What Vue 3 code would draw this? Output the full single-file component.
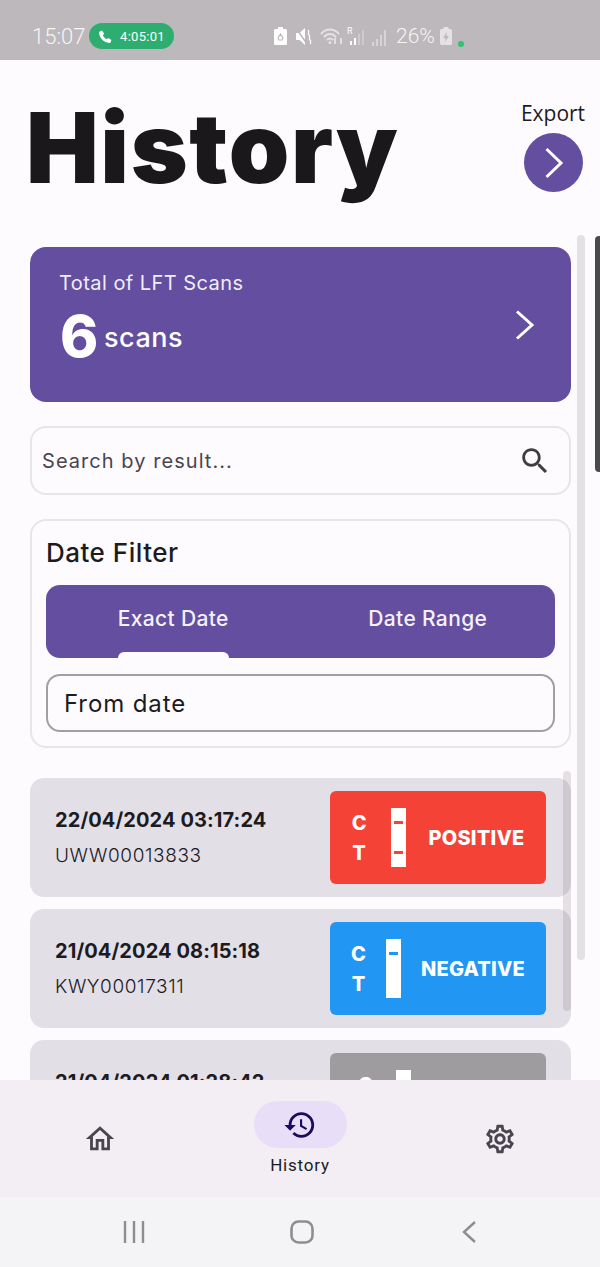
<script setup>
const scans = [
  { date: '22/04/2024 03:17:24', code: 'UWW00013833', label: 'POSITIVE', kind: 'positive', marks: 2 },
  { date: '21/04/2024 08:15:18', code: 'KWY00017311', label: 'NEGATIVE', kind: 'negative', marks: 1 },
  { date: '21/04/2024 01:28:42', code: '', label: '', kind: 'invalid', marks: 0 }
]
</script>

<template>
  <div class="phone">
    <header class="status">
      <span class="clock">15:07</span>
      <span class="call">
        <svg width="15" height="15" viewBox="0 0 24 24"><path fill="#fff" d="M6.6 2.5l3.2 5.2-2 2.4c1.200 2.800 3.300 4.900 6.100 6.100l2.400-2 5.200 3.200-1.300 3.800c-.3.8-1 1.300-1.900 1.200C9.300 21.800 2.200 14.700 1.600 5.700c-.1-.9.400-1.600 1.200-1.900z"/></svg>
        <span>4:05:01</span>
      </span>
      <div class="status-icons">
        <svg class="si-saver" width="13" height="18" viewBox="0 0 13 18"><path fill="#fff" d="M4 0h5v2h2.500A1.500 1.500 0 0 1 13 3.500V16.500A1.500 1.500 0 0 1 11.500 18H1.500A1.500 1.500 0 0 1 0 16.500V3.500A1.500 1.500 0 0 1 1.500 2H4z"/><path fill="none" stroke="#bcb8bb" stroke-width="1.200" d="M6.500 7l2.500 4-1 2H5l-1-2z"/></svg>
        <svg class="si-mute" width="17" height="19" viewBox="0 0 17 19"><path fill="#fff" d="M0 6h3.500L9 1v17l-5.500-5H0z"/><path stroke="#bcb8bb" stroke-width="1.500" d="M0 1l11 16"/><path fill="none" stroke="#fff" stroke-width="1.300" d="M12 3c2 2-1 3 1 5s-1 3 1 5-1 2 1 4"/></svg>
        <svg class="si-wifi" width="24" height="18" viewBox="0 0 24 18"><path fill="none" stroke="#e4e2e4" stroke-width="2" d="M1 7c5-6 13-6 18 0M4 10c3.500-4 8.500-4 12 0M7 13c2-2 4-2 6 0"/><circle cx="10" cy="15.500" r="1.500" fill="#e4e2e4"/><path stroke="#f4f4f4" stroke-width="1.300" d="M15 11v6M21 11v6"/></svg>
        <svg class="si-signal" width="18" height="20" viewBox="0 0 18 20"><text x="0" y="8" class="roam">R</text><path fill="#fff" d="M3 15h2v4H3zM7 12h2v7H7z"/><path fill="#cdcbcd" d="M11 8h2v11h-2zM15 4h2v15h-2z"/></svg>
        <svg class="si-signal2" width="16" height="17" viewBox="0 0 16 17"><path fill="#d6d4d6" d="M0 13h2v4H0zM4 10h2v7H4zM8 6h2v11H8zM12 1h2v16h-2z"/></svg>
        <span class="pct">26%</span>
        <svg class="si-batt" width="12" height="18" viewBox="0 0 12 18"><path fill="#e4e2e4" d="M3.500 0h5v2h2A1.500 1.500 0 0 1 12 3.500V16.500A1.500 1.500 0 0 1 10.500 18H1.500A1.500 1.500 0 0 1 0 16.500V3.500A1.500 1.500 0 0 1 1.500 2h2z"/><path fill="#bcb8bb" d="M7 5L3 11h2.500L5 15l4-6H6.500z"/></svg>
        <span class="dot"></span>
      </div>
    </header>

    <main class="content">
      <div class="top">
        <h1 class="title">History</h1>
        <div class="export">
          <span class="export-label">Export</span>
          <button class="export-btn">
            <svg width="20" height="32" viewBox="0 0 20 32"><path fill="none" stroke="#fff" stroke-width="3" d="M2.500 2L17 16 2.500 30"/></svg>
          </button>
        </div>
      </div>

      <section class="total">
        <div>
          <div class="total-label">Total of LFT Scans</div>
          <div class="total-value"><b>6</b><span>scans</span></div>
        </div>
        <svg width="20" height="30" viewBox="0 0 20 30"><path fill="none" stroke="#fff" stroke-width="3" d="M2 1.500L17 15 2 28.500"/></svg>
      </section>

      <div class="search">
        <span>Search by result...</span>
        <svg width="34" height="34" viewBox="0 0 24 24"><path fill="#3f3d42" d="M15.500 14h-.79l-.28-.27C15.410 12.590 16 11.110 16 9.500 16 5.910 13.090 3 9.500 3S3 5.910 3 9.500 5.910 16 9.500 16c1.610 0 3.090-.59 4.230-1.570l.27.28v.79l5 4.990L20.490 19l-4.990-5zm-6 0C7.010 14 5 11.990 5 9.500S7.010 5 9.500 5 14 7.010 14 9.500 11.990 14 9.500 14z"/></svg>
      </div>

      <section class="filter">
        <h2>Date Filter</h2>
        <div class="tabs">
          <div class="tab active"><span>Exact Date<i class="indicator"></i></span></div>
          <div class="tab"><span>Date Range</span></div>
        </div>
        <div class="from">From date</div>
      </section>

      <ul class="list">
        <li v-for="s in scans" :key="s.date" class="row">
          <div class="meta">
            <div class="date">{{ s.date }}</div>
            <div v-if="s.code" class="code">{{ s.code }}</div>
          </div>
          <div class="badge" :class="s.kind">
            <div class="letters"><span>C</span><span>T</span></div>
            <div class="strip">
              <i v-if="s.marks > 0" class="mark"></i>
              <i v-if="s.marks > 1" class="mark second"></i>
            </div>
            <span class="result">{{ s.label }}</span>
          </div>
        </li>
      </ul>

      <div class="bar bar-outer"></div>
      <div class="bar bar-inner"></div>
      <div class="edge"></div>
    </main>

    <nav class="nav">
      <div class="nav-item">
        <svg width="34" height="34" viewBox="0 0 24 24"><path fill="#49454f" d="M12 5.690l5 4.500V18h-2v-6H9v6H7v-7.810l5-4.500M12 3L2 12h3v8h6v-6h2v6h6v-8h3L12 3z"/></svg>
      </div>
      <div class="nav-item current">
        <div class="pill">
          <svg width="34" height="34" viewBox="0 0 24 24"><path fill="#1d0a5c" d="M13 3c-4.970 0-9 4.030-9 9H1l3.890 3.890.07.14L9 12H6c0-3.870 3.130-7 7-7s7 3.130 7 7-3.130 7-7 7c-1.930 0-3.680-.79-4.940-2.060l-1.420 1.420C8.270 19.990 10.510 21 13 21c4.970 0 9-4.030 9-9s-4.030-9-9-9zm-1 5v5l4.280 2.540.72-1.210-3.500-2.080V8H12z"/></svg>
        </div>
        <span>History</span>
      </div>
      <div class="nav-item">
        <svg width="34" height="34" viewBox="0 0 24 24"><path fill="#49454f" d="M19.430 12.980c.04-.32.07-.64.07-.98 0-.34-.03-.66-.07-.98l2.110-1.650c.19-.15.24-.42.12-.64l-2-3.460c-.09-.16-.26-.25-.44-.25-.06 0-.12.01-.17.03l-2.490 1c-.52-.4-1.080-.73-1.690-.98l-.38-2.650C14.460 2.180 14.250 2 14 2h-4c-.25 0-.46.18-.49.42l-.38 2.650c-.61.25-1.170.59-1.690.98l-2.490-1c-.06-.02-.12-.03-.18-.03-.17 0-.34.09-.43.25l-2 3.460c-.13.22-.07.49.12.64l2.110 1.650c-.04.32-.07.65-.07.98 0 .33.03.66.07.98l-2.110 1.650c-.19.15-.24.42-.12.64l2 3.460c.09.16.26.25.44.25.06 0 .12-.01.17-.03l2.490-1c.52.4 1.080.73 1.690.98l.38 2.650c.03.24.24.42.49.42h4c.25 0 .46-.18.49-.42l.38-2.650c.61-.25 1.170-.59 1.690-.98l2.490 1c.06.02.12.03.18.03.17 0 .34-.09.43-.25l2-3.460c.12-.22.07-.49-.12-.64l-2.110-1.650zm-1.980-1.710c.04.31.05.52.05.73 0 .21-.02.43-.05.73l-.14 1.130.89.7 1.080.84-.7 1.210-1.270-.51-1.040-.42-.9.68c-.43.32-.84.56-1.250.73l-1.060.43-.16 1.130-.2 1.350h-1.400l-.19-1.350-.16-1.130-1.060-.43c-.43-.18-.83-.41-1.230-.71l-.91-.7-1.060.43-1.270.51-.7-1.210 1.080-.84.89-.7-.14-1.130c-.03-.31-.05-.54-.05-.74s.02-.43.05-.73l.14-1.130-.89-.7-1.080-.84.7-1.210 1.270.51 1.040.42.9-.68c.43-.32.84-.56 1.250-.73l1.060-.43.16-1.130.2-1.350h1.390l.19 1.350.16 1.130 1.060.43c.43.18.83.41 1.230.71l.91.7 1.060-.43 1.270-.51.7 1.210-1.070.85-.89.7.14 1.130zM12 8c-2.210 0-4 1.790-4 4s1.790 4 4 4 4-1.790 4-4-1.790-4-4-4zm0 6c-1.100 0-2-.9-2-2s.9-2 2-2 2 .9 2 2-.9 2-2 2z"/></svg>
      </div>
    </nav>

    <footer class="sysnav">
      <svg width="22" height="22" viewBox="0 0 22 22"><path stroke="#8e8e90" stroke-width="2.400" d="M2 0v22M11 0v22M20 0v22"/></svg>
      <svg class="home" width="24" height="24" viewBox="0 0 24 24"><rect x="1.500" y="1.500" width="21" height="21" rx="7" fill="none" stroke="#8e8e90" stroke-width="2.600"/></svg>
      <svg class="back" width="14" height="22" viewBox="0 0 14 22"><path fill="none" stroke="#8e8e90" stroke-width="2.400" d="M13 1L2 11l11 10"/></svg>
    </footer>
  </div>
</template>

<style scoped>
.phone {
  width: 600px;
  height: 1267px;
  display: flex;
  flex-direction: column;
  background: #fefbfe;
  font-family: Inter, "Noto Sans", sans-serif;
  color: #1c1b1f;
  overflow: hidden;
}

/* status bar */
.status {
  height: 60px;
  flex: none;
  background: #bcb8bb;
  display: flex;
  align-items: center;
  padding: 12px 0 0 32px;
  box-sizing: border-box;
  color: #f6f5f6;
  font-family: Roboto, sans-serif;
}
.clock { font-size: 22px; font-weight: 300; width: 57px; }
.call {
  width: 85px;
  height: 26px;
  background: #2ead71;
  border-radius: 13px;
  display: flex;
  align-items: center;
  justify-content: center;
  gap: 7px;
  color: #fff;
  font-size: 13px;
  letter-spacing: .3px;
}
.status-icons {
  margin-left: 100px;
  display: flex;
  align-items: center;
}
.si-mute { margin-left: 9px; }
.si-wifi { margin-left: 7px; }
.si-signal { margin-left: 3px; }
.si-signal2 { margin-left: 7px; margin-top: 2px; }
.roam { font-size: 9px; fill: #fff; font-family: Roboto, sans-serif; }
.pct { font-size: 21px; font-weight: 300; margin-left: 8px; width: 42px; }
.si-batt { margin-left: 2px; }
.dot {
  width: 6px;
  height: 6px;
  border-radius: 50%;
  background: #2fc46e;
  margin: 16px 0 0 6px;
}

/* main column */
.content {
  position: relative;
  flex: 1;
  min-height: 0;
  overflow: hidden;
  padding: 0 29px 0 30px;
}
.top {
  height: 187px;
  display: flex;
  justify-content: space-between;
  align-items: flex-start;
}
.title {
  margin: 28px 0 0 -4px;
  font-size: 97px;
  line-height: 120px;
  font-weight: 900;
  letter-spacing: 1.6px;
  color: #1a181b;
}
.export {
  margin: 39px -16px 0 0;
  display: flex;
  flex-direction: column;
  align-items: center;
  width: 68px;
}
.export-label { font-size: 21px; line-height: 28px; font-family: "Open Sans", sans-serif; }
.export-btn {
  margin-top: 6px;
  width: 59px;
  height: 59px;
  border: none;
  border-radius: 50%;
  background: #634ea0;
  display: flex;
  align-items: center;
  justify-content: center;
  padding: 0 0 0 2px;
}

.total {
  height: 155px;
  box-sizing: border-box;
  background: #634ea0;
  border-radius: 16px;
  color: #fff;
  padding: 23px 36px 0 29px;
  display: flex;
  justify-content: space-between;
  align-items: flex-start;
}
.total > svg { margin-top: 40px; }
.total-label { font-size: 20px; line-height: 26px; letter-spacing: .45px; color: #f0edf7; }
.total-value { display: flex; align-items: center; margin-top: 5px; padding-left: 1px; height: 70px; }
.total-value b { font-size: 58px; line-height: 70px; font-weight: 800; width: 44px; }
.total-value span { font-size: 27px; font-weight: 500; letter-spacing: .5px; margin-top: 2px; }

.search {
  margin-top: 24px;
  height: 69px;
  box-sizing: border-box;
  border: 2px solid #e8e5ea;
  border-radius: 16px;
  display: flex;
  align-items: center;
  justify-content: space-between;
  padding: 0 17px 0 10px;
  font-size: 20px;
  letter-spacing: 1.05px;
  color: #49454f;
}

.filter {
  margin-top: 24px;
  height: 229px;
  box-sizing: border-box;
  border: 2px solid #e8e5ea;
  border-radius: 16px;
  padding: 0 14px;
}
.filter h2 {
  margin: 15px 0 15px;
  font-size: 26px;
  line-height: 34px;
  font-weight: 500;
  letter-spacing: .5px;
}
.tabs {
  height: 73px;
  background: #634ea0;
  border-radius: 14px;
  display: grid;
  grid-template-columns: 1fr 1fr;
  color: #f4f1fa;
  font-size: 21px;
  font-weight: 500;
  letter-spacing: .35px;
  overflow: hidden;
}
.tab { display: flex; justify-content: center; }
.tab span { position: relative; height: 73px; line-height: 68px; }
.indicator {
  position: absolute;
  left: 0;
  right: 0;
  bottom: 0;
  height: 6px;
  background: #fefbfe;
  border-radius: 6px 6px 0 0;
}
.from {
  margin-top: 16px;
  height: 58px;
  box-sizing: border-box;
  border: 2px solid #a19fa3;
  border-radius: 14px;
  display: flex;
  align-items: center;
  padding-left: 16px;
  font-size: 24px;
  letter-spacing: .9px;
}

.list {
  list-style: none;
  margin: 30px 0 0;
  padding: 0;
  display: flex;
  flex-direction: column;
  gap: 12px;
}
.row {
  height: 119px;
  flex: none;
  box-sizing: border-box;
  background: #e3dfe7;
  border-radius: 14px;
  padding: 13px 25px 0;
  display: flex;
  justify-content: space-between;
  align-items: flex-start;
}
.meta { padding-top: 15px; }
.date { font-size: 20px; line-height: 28px; font-weight: 700; letter-spacing: .1px; color: #1c1b1f; }
.code { font-size: 19px; line-height: 28px; margin-top: 8px; font-weight: 300; letter-spacing: .6px; color: #1c1b1f; }
.badge {
  width: 216px;
  height: 93px;
  flex: none;
  border-radius: 6px;
  display: flex;
  align-items: center;
  justify-content: center;
  gap: 23px;
  color: #fff;
  font-weight: 800;
}
.badge.positive .letters { margin-right: 1px; }
.badge.negative { gap: 20px; }
.positive { background: #f44336; --mark: #f44336; }
.negative { background: #2196f3; --mark: #2196f3; }
.invalid { background: #9e9c9e; --mark: #9e9c9e; }
.letters {
  display: flex;
  flex-direction: column;
  align-items: center;
  gap: 4px;
  width: 15px;
  font-size: 20px;
  line-height: 26px;
}
.strip {
  position: relative;
  width: 15px;
  height: 59px;
  background: #fff;
}
.invalid .strip { margin-right: 107px; }
.mark {
  position: absolute;
  left: 3px;
  top: 13px;
  width: 9px;
  height: 3px;
  background: var(--mark);
}
.mark.second { top: 43px; }
.result { font-size: 20px; letter-spacing: .2px; }
.invalid .result { display: none; }

/* overlays */
.bar { position: absolute; width: 8px; border-radius: 4px; }
.bar-outer { left: 577px; top: 175px; height: 725px; background: #e3e1e4; }
.bar-inner { left: 563px; top: 711px; height: 240px; background: rgba(110, 106, 112, .18); }
.edge {
  position: absolute;
  left: 595px;
  top: 176px;
  width: 8px;
  height: 236px;
  background: #4a494c;
  border-radius: 4px;
}

/* bottom nav */
.nav {
  height: 117px;
  flex: none;
  position: relative;
  background: #f2eef4;
  display: grid;
  grid-template-columns: repeat(3, 1fr);
  justify-items: center;
  align-items: center;
}
.nav-item { display: flex; flex-direction: column; align-items: center; }
.current { font-family: Roboto, sans-serif; font-size: 17px; font-weight: 400; letter-spacing: .8px; }
.current span { line-height: 22px; margin-top: 6px; }
.pill {
  width: 93px;
  height: 47px;
  border-radius: 24px;
  background: #e8def8;
  display: flex;
  align-items: center;
  justify-content: center;
}

.sysnav {
  height: 70px;
  flex: none;
  background: #f4f3f6;
  display: flex;
  align-items: center;
  padding: 0 0 0 123px;
  box-sizing: border-box;
}
.home { margin-left: 145px; }
.back { margin-left: 148px; }
</style>
